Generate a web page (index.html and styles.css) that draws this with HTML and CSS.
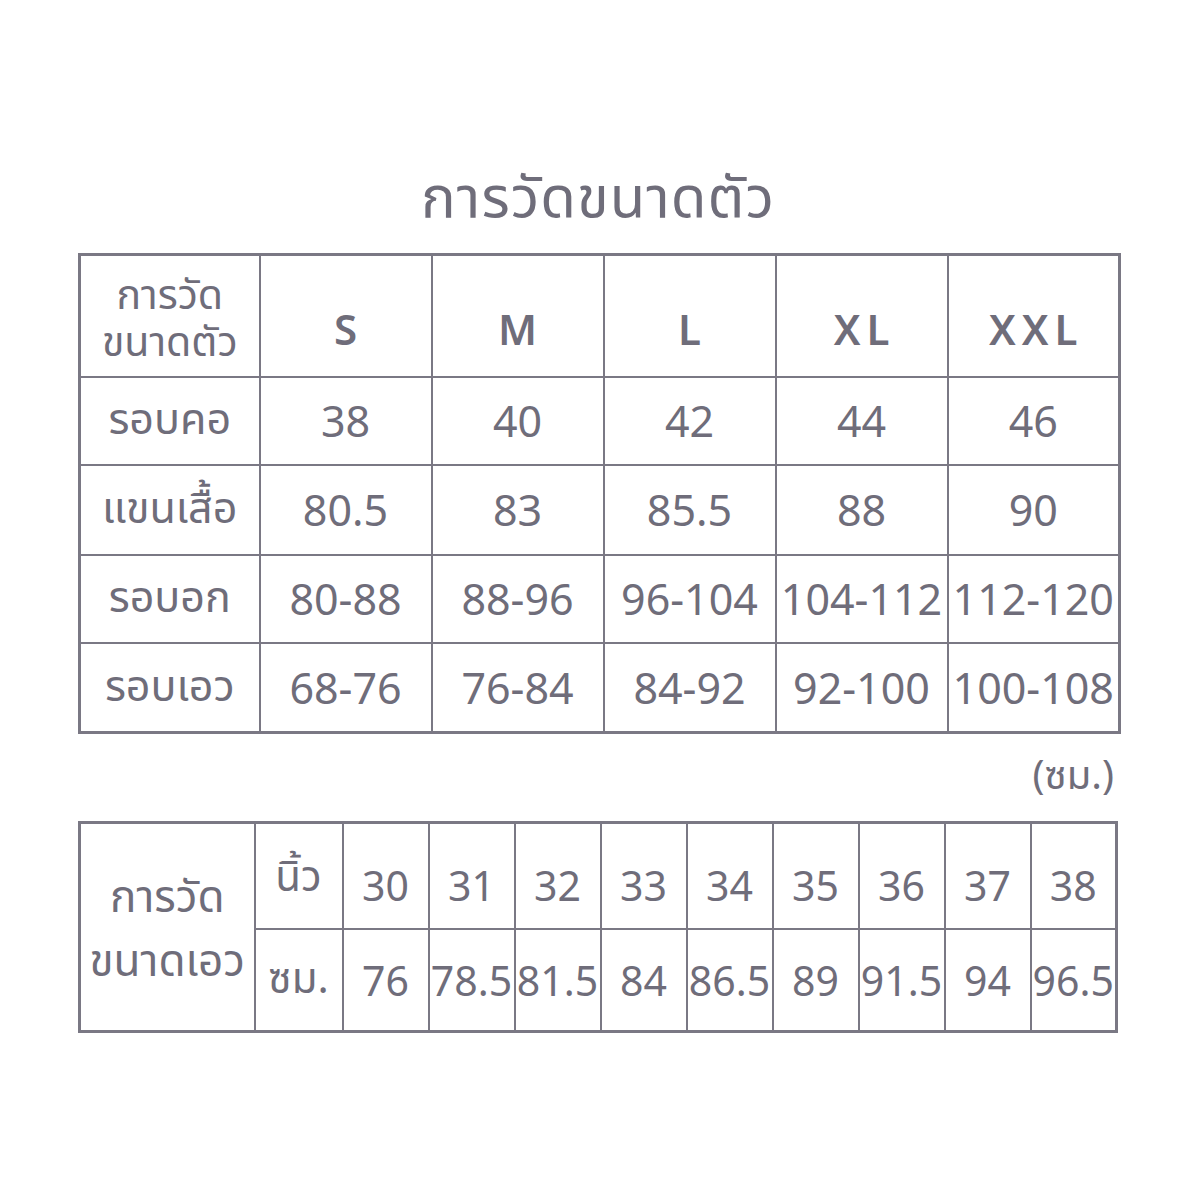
FILE: index.html
```html
<!DOCTYPE html>
<html lang="th">
<head>
<meta charset="utf-8">
<link rel="stylesheet" href="styles.css">
</head>
<body>
<div class="sheet">
  <h1 class="title">การวัดขนาดตัว</h1>
  <table class="chart size-chart">
    <colgroup>
      <col class="c-label"><col class="c-size"><col class="c-size"><col class="c-size"><col class="c-size"><col class="c-size">
    </colgroup>
    <tr class="head-row">
      <th class="label"><span class="ln">การวัด</span><span class="ln">ขนาดตัว</span></th>
      <th class="size">S</th><th class="size">M</th><th class="size">L</th><th class="size">XL</th><th class="size">XXL</th>
    </tr>
    <tr class="r1"><td class="label">รอบคอ</td><td>38</td><td>40</td><td>42</td><td>44</td><td>46</td></tr>
    <tr class="r2"><td class="label">แขนเสื้อ</td><td>80.5</td><td>83</td><td>85.5</td><td>88</td><td>90</td></tr>
    <tr class="r3"><td class="label">รอบอก</td><td>80-88</td><td>88-96</td><td>96-104</td><td>104-112</td><td>112-120</td></tr>
    <tr class="r4"><td class="label">รอบเอว</td><td>68-76</td><td>76-84</td><td>84-92</td><td>92-100</td><td>100-108</td></tr>
  </table>
  <div class="unit">(ซม.)</div>
  <table class="chart waist-chart">
    <colgroup>
      <col class="w-label"><col class="w-unit"><col><col><col><col><col><col><col><col><col>
    </colgroup>
    <tr class="w1">
      <td class="label" rowspan="2"><span class="ln">การวัด</span><span class="ln">ขนาดเอว</span></td>
      <td class="u">นิ้ว</td><td>30</td><td>31</td><td>32</td><td>33</td><td>34</td><td>35</td><td>36</td><td>37</td><td>38</td>
    </tr>
    <tr class="w2">
      <td class="u">ซม.</td><td>76</td><td>78.5</td><td>81.5</td><td>84</td><td>86.5</td><td>89</td><td>91.5</td><td>94</td><td>96.5</td>
    </tr>
  </table>
</div>
</body>
</html>
```
FILE: styles.css
```css
html, body {
  margin: 0;
  padding: 0;
  background: #ffffff;
}
body {
  font-family: "Noto Sans", "Noto Sans Thai", "Open Sans", sans-serif;
  color: #6f6d7a;
}
.sheet {
  width: 1040px;
  margin-left: 78px;
  padding-top: 160px;
}
.title {
  margin: 0;
  height: 93px;
  font-size: 58px;
  font-weight: 400;
  line-height: 70px;
  text-align: center;
  letter-spacing: 1px;
}
.chart {
  border-collapse: collapse;
  table-layout: fixed;
  width: 1040px;
  border: 3px solid #7a7884;
}
.chart td, .chart th {
  border: 2px solid #7a7884;
  padding: 0;
  text-align: center;
  vertical-align: middle;
  white-space: nowrap;
  font-weight: 400;
}
.ln {
  display: block;
}
.size-chart {
  font-size: 43px;
}
.c-label { width: 180px; }
.c-size { width: 172px; }
.head-row { height: 122px; }
.r1 { height: 88px; }
.r2 { height: 90px; }
.r3 { height: 88px; }
.r4 { height: 90px; }
.size-chart th.label {
  font-size: 41px;
  padding-top: 2px;
}
.size-chart th.label .ln {
  height: 47px;
  line-height: 47px;
}
.size-chart th.size {
  font-weight: 600;
  font-size: 42px;
  letter-spacing: 6px;
  text-indent: 6px;
  padding-top: 26px;
}
.size-chart td.label {
  font-size: 43px;
}
.unit {
  height: 87px;
  line-height: 80px;
  text-align: right;
  font-size: 40px;
  padding-right: 4px;
}
.waist-chart {
  font-size: 41px;
}
.w-label { width: 175px; }
.w-unit { width: 88px; }
.w1 { height: 106px; }
.w2 { height: 103px; }
.w1 td { padding-top: 18px; }
.waist-chart td.label {
  font-size: 44px;
  padding-top: 0;
}
.waist-chart td.label .ln {
  height: 64px;
  line-height: 64px;
}
.waist-chart td.u {
  font-size: 42px;
}
.w1 td.u { padding-top: 4px; }
```
